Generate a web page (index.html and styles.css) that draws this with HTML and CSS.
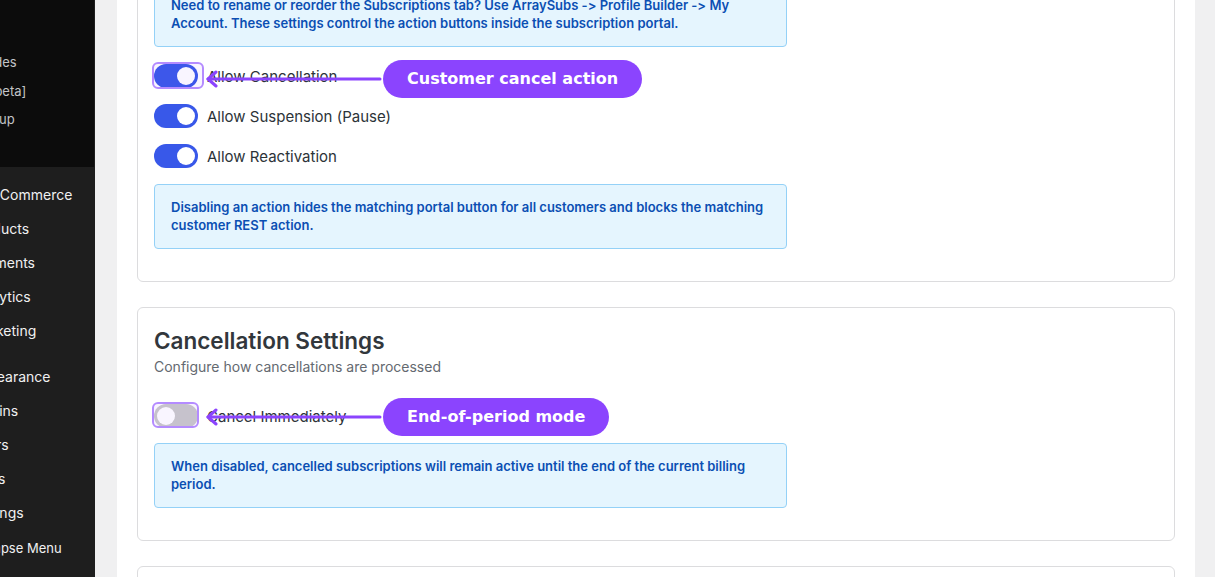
FILE: index.html
```html
<!DOCTYPE html>
<html lang="en">
<head>
    <meta charset="UTF-8">
    <meta name="viewport" content="width=device-width, initial-scale=1.0">
    <title>Subscription Settings</title>
    <link rel="stylesheet" href="styles.css">
</head>
<body>

<nav class="sidebar">
    <div class="menu">
        <ul class="submenu">
            <li>Shortcodes</li>
            <li>Import [beta]</li>
            <li>Easy Setup</li>
        </ul>
        <ul class="main-menu">
            <li>WooCommerce</li>
            <li>Products</li>
            <li>Payments</li>
            <li>Analytics</li>
            <li>Marketing</li>
            <li class="separator">Appearance</li>
            <li>Plugins</li>
            <li>Users</li>
            <li>Tools</li>
            <li>Settings</li>
            <li class="collapse">Collapse Menu</li>
        </ul>
    </div>
</nav>

<main class="content">
    <div class="panel">

        <section class="card">
            <div class="notice">
                Need to rename or reorder the Subscriptions tab? Use ArraySubs -&gt; Profile Builder -&gt; My
                Account. These settings control the action buttons inside the subscription portal.
            </div>

            <div class="toggles">
                <div class="toggle-row">
                    <span class="toggle on"></span>
                    <span class="label">Allow Cancellation</span>
                    <span class="highlight wide"></span>
                    <div class="callout first">
                        <svg class="arrow" width="179" height="18" viewBox="0 0 179 18">
                            <path d="M4 9 H176" stroke="#8b44fe" stroke-width="3" stroke-linecap="round" fill="none"/>
                            <path d="M12 2 L4 9 L12 16" stroke="#8b44fe" stroke-width="3" stroke-linecap="round" stroke-linejoin="round" fill="none"/>
                        </svg>
                        <span class="pill">Customer cancel action</span>
                    </div>
                </div>
                <div class="toggle-row">
                    <span class="toggle on"></span>
                    <span class="label">Allow Suspension (Pause)</span>
                </div>
                <div class="toggle-row">
                    <span class="toggle on"></span>
                    <span class="label">Allow Reactivation</span>
                </div>
            </div>

            <div class="notice">
                Disabling an action hides the matching portal button for all customers and blocks the matching
                customer REST action.
            </div>
        </section>

        <section class="card">
            <h2>Cancellation Settings</h2>
            <p class="subtitle">Configure how cancellations are processed</p>

            <div class="toggles single">
                <div class="toggle-row">
                    <span class="toggle"></span>
                    <span class="label">Cancel Immediately</span>
                    <span class="highlight"></span>
                    <div class="callout second">
                        <svg class="arrow" width="179" height="18" viewBox="0 0 179 18">
                            <path d="M4 9 H176" stroke="#8b44fe" stroke-width="3" stroke-linecap="round" fill="none"/>
                            <path d="M12 2 L4 9 L12 16" stroke="#8b44fe" stroke-width="3" stroke-linecap="round" stroke-linejoin="round" fill="none"/>
                        </svg>
                        <span class="pill">End-of-period mode</span>
                    </div>
                </div>
            </div>

            <div class="notice">
                When disabled, cancelled subscriptions will remain active until the end of the current billing
                period.
            </div>
        </section>

        <section class="card">
            <h2>Renewal Settings</h2>
            <p class="subtitle">Configure how renewals are handled</p>
        </section>

    </div>
</main>

</body>
</html>
```

FILE: styles.css
```css
body {
    margin: 0;
    height: 577px;
    overflow: hidden;
    display: flex;
    background-color: #f0f0f1;
    font-family: Inter, "Noto Sans", sans-serif;
    font-feature-settings: "calt" 0, "liga" 0;
}
ul {
    list-style: none;
    margin: 0;
    padding: 0;
}

/* admin menu, scrolled out to the left */
.sidebar {
    width: 95px;
    flex-shrink: 0;
    background-color: #1e1e1e;
    overflow: hidden;
}
.menu {
    width: 160px;
    margin-left: -66px;
}
.submenu {
    height: 167px;
    box-sizing: border-box;
    padding: 48px 0 0;
    background-color: #0c0c0c;
}
.submenu li {
    height: 28.5px;
    line-height: 28.5px;
    padding-left: 12px;
    font-size: 13px;
    color: #c3c4c7;
    white-space: nowrap;
}
.main-menu {
    padding-top: 11px;
}
.main-menu li {
    height: 34px;
    line-height: 34px;
    padding-left: 36px;
    font-size: 14px;
    color: #f0f0f1;
    white-space: nowrap;
}
.main-menu li.separator {
    margin-top: 12px;
}
.main-menu li.collapse {
    margin-top: 1px;
    font-size: 13px;
}

/* page */
.content {
    flex: 1;
    padding: 0 20px 0 22px;
}
.panel {
    background-color: #fff;
    margin-top: -55px;
    padding: 20px;
    min-height: 700px;
}
.card {
    border: 1px solid #dcdcde;
    border-radius: 6px;
    padding: 16px;
    margin-bottom: 25px;
    background-color: #fff;
}
.card h2 {
    margin: 1px 0 0;
    font-size: 22.5px;
    line-height: 32px;
    font-weight: 600;
    color: #32373c;
}
.subtitle {
    margin: 0;
    font-size: 14px;
    line-height: 20px;
    color: #646970;
}

.notice {
    width: 633px;
    box-sizing: border-box;
    padding: 13px 16px 14px;
    margin-bottom: 16px;
    background-color: #e5f5fe;
    border: 1px solid #94d1f7;
    border-radius: 4px;
    color: #0b4fb3;
    font-size: 13px;
    line-height: 18px;
    font-weight: 600;
}

.toggles {
    display: flex;
    flex-direction: column;
    gap: 16px;
    margin: 17px 0 16px;
}
.toggles.single {
    margin: 27px 0 15px;
}
.toggle-row {
    position: relative;
    display: flex;
    align-items: center;
    gap: 9px;
    height: 24px;
}
.toggle {
    position: relative;
    width: 44px;
    height: 24px;
    border-radius: 12px;
    background-color: #c9c9c9;
    flex-shrink: 0;
}
.toggle::after {
    content: "";
    position: absolute;
    top: 3px;
    left: 3px;
    width: 18px;
    height: 18px;
    border-radius: 50%;
    background-color: #fff;
}
.toggle.on {
    background-color: #3858e9;
}
.toggle.on::after {
    left: 23px;
}
.label {
    font-size: 15px;
    color: #2c3338;
}

/* annotation overlays */
.highlight {
    position: absolute;
    left: -2px;
    top: -2px;
    width: 47px;
    height: 26px;
    box-sizing: border-box;
    border: 2px solid #b48bff;
    border-radius: 6px;
    background-color: rgba(150, 90, 255, 0.06);
}
.highlight.wide {
    width: 52px;
    height: 27px;
}
.callout {
    position: absolute;
    left: 50px;
    display: flex;
    align-items: center;
}
.callout.first {
    top: -4px;
}
.callout.second {
    top: -6px;
}
.arrow {
    display: block;
}
.pill {
    height: 38px;
    line-height: 38px;
    padding: 0 24px;
    border-radius: 19px;
    background-color: #8b44fe;
    color: #fff;
    font-family: "DejaVu Sans", sans-serif;
    font-weight: bold;
    font-size: 16px;
    white-space: nowrap;
}
```
